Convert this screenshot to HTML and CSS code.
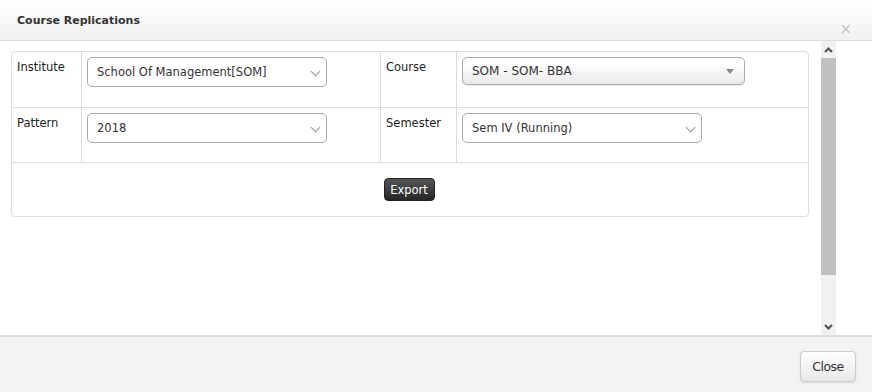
FILE: index.html
```html
<!DOCTYPE html>
<html>
<head>
  <title>Course Replications</title>
  <link rel="stylesheet" href="styles.css">
</head>
<body>
  <div class="modal">
    <div class="modal-header">
      <h4>Course Replications</h4>
      <span class="close-x">&times;</span>
    </div>

    <div class="modal-body">
      <div class="content">
        <table class="panel">
          <colgroup>
            <col class="c-lbl1">
            <col class="c-fld1">
            <col class="c-lbl2">
            <col>
          </colgroup>
          <tr class="first">
            <td class="lbl">Institute</td>
            <td class="fld">
              <div class="select">School Of Management[SOM]<span class="chev"></span></div>
            </td>
            <td class="lbl">Course</td>
            <td class="fld">
              <div class="select-course">SOM - SOM- BBA<span class="tri"></span></div>
            </td>
          </tr>
          <tr>
            <td class="lbl">Pattern</td>
            <td class="fld">
              <div class="select">2018<span class="chev"></span></div>
            </td>
            <td class="lbl">Semester</td>
            <td class="fld">
              <div class="select">Sem IV (Running)<span class="chev"></span></div>
            </td>
          </tr>
          <tr>
            <td colspan="4" class="actions">
              <button class="btn-export">Export</button>
            </td>
          </tr>
        </table>
      </div>

      <div class="scrollbar">
        <div class="sb-btn"><svg width="9" height="6" viewBox="0 0 9 6"><path d="M1 5 L4.5 1.5 L8 5" fill="none" stroke="#505050" stroke-width="2"/></svg></div>
        <div class="sb-track">
          <div class="sb-thumb"></div>
        </div>
        <div class="sb-btn"><svg width="9" height="6" viewBox="0 0 9 6"><path d="M1 1 L4.5 4.5 L8 1" fill="none" stroke="#505050" stroke-width="2"/></svg></div>
      </div>
    </div>

    <div class="modal-footer">
      <button class="btn-close">Close</button>
    </div>
  </div>
</body>
</html>
```

FILE: styles.css
```css
body { margin: 0; font-family: "DejaVu Sans", Verdana, sans-serif; font-size: 11.5px; color: #333; }
.modal { width: 872px; height: 392px; display: flex; flex-direction: column; background: #fff; }

.modal-header { height: 40px; border-bottom: 1px solid #dcdcdc; background: linear-gradient(#ffffff, #f1f1f1); display: flex; align-items: center; justify-content: space-between; padding: 0 17px; }
.modal-header h4 { margin: 0; font-size: 11px; font-weight: bold; color: #333; margin-top: 1px; }
.close-x { color: #c4c4c4; font-size: 15px; margin-top: 17px; margin-right: 3px; }

.modal-body { height: 294px; display: flex; }
.content { flex: 1; padding: 10px 12px 0 11px; }

.panel { width: 798px; table-layout: fixed; border-collapse: separate; border-spacing: 0; border: 1px solid #ddd; border-radius: 4px; }
.c-lbl1 { width: 70px; }
.c-fld1 { width: 299px; }
.c-lbl2 { width: 76px; }
.panel td { vertical-align: top; border-bottom: 1px solid #ddd; border-right: 1px solid #ddd; height: 55px; padding: 0; box-sizing: border-box; }
.panel tr.first td { height: 56px; }
.panel td:last-child { border-right: none; }
.panel tr:last-child td { border-bottom: none; height: 53px; }
.lbl { padding: 8px 0 0 5px !important; color: #222; }
.fld { padding: 5px 0 0 5px !important; }

.select { box-sizing: border-box; width: 240px; height: 30px; border: 1px solid #aaa; border-radius: 5px; display: flex; align-items: center; padding-left: 9px; position: relative; color: #333; }
.chev { position: absolute; right: 7px; top: 10px; width: 6px; height: 6px; border-right: 1px solid #999; border-bottom: 1px solid #999; transform: rotate(45deg); }

.select-course { width: 283px; height: 28px; box-sizing: border-box; border: 1px solid #aaa; border-radius: 5px; background: linear-gradient(#ffffff 20%, #e9e9e9); display: flex; align-items: center; padding-left: 9px; position: relative; font-size: 12px; color: #333; box-shadow: 0 1px 1px rgba(0,0,0,0.08); }
.tri { position: absolute; right: 10px; top: 11px; border-left: 4px solid transparent; border-right: 4px solid transparent; border-top: 5px solid #888; }

.actions { text-align: center; padding-top: 15px !important; }
.btn-export { font-family: "DejaVu Sans", Verdana, sans-serif; font-size: 11.5px; color: #fff; background: linear-gradient(#555, #262626); border: 1px solid #222; border-radius: 4px; width: 51px; height: 23px; padding: 0; margin-left: -2px; }

.scrollbar { width: 15px; margin-right: 36px; background: #f1f1f1; display: flex; flex-direction: column; }
.sb-btn { height: 17px; display: flex; align-items: center; justify-content: center; }
.sb-track { flex: 1; }
.sb-thumb { height: 217px; background: #c1c1c1; }

.modal-footer { flex: 1; border-top: 2px solid #ddd; background: #f3f3f3; display: flex; justify-content: flex-end; align-items: flex-start; padding: 14px 16px 0 0; }
.btn-close { font-family: "DejaVu Sans", Verdana, sans-serif; font-size: 12.5px; letter-spacing: -0.5px; color: #333; width: 56px; height: 31px; background: linear-gradient(#ffffff, #e8e8e8); border: 1px solid #ccc; border-radius: 4px; box-shadow: 0 1px 2px rgba(0,0,0,0.1); padding: 0; }
```
